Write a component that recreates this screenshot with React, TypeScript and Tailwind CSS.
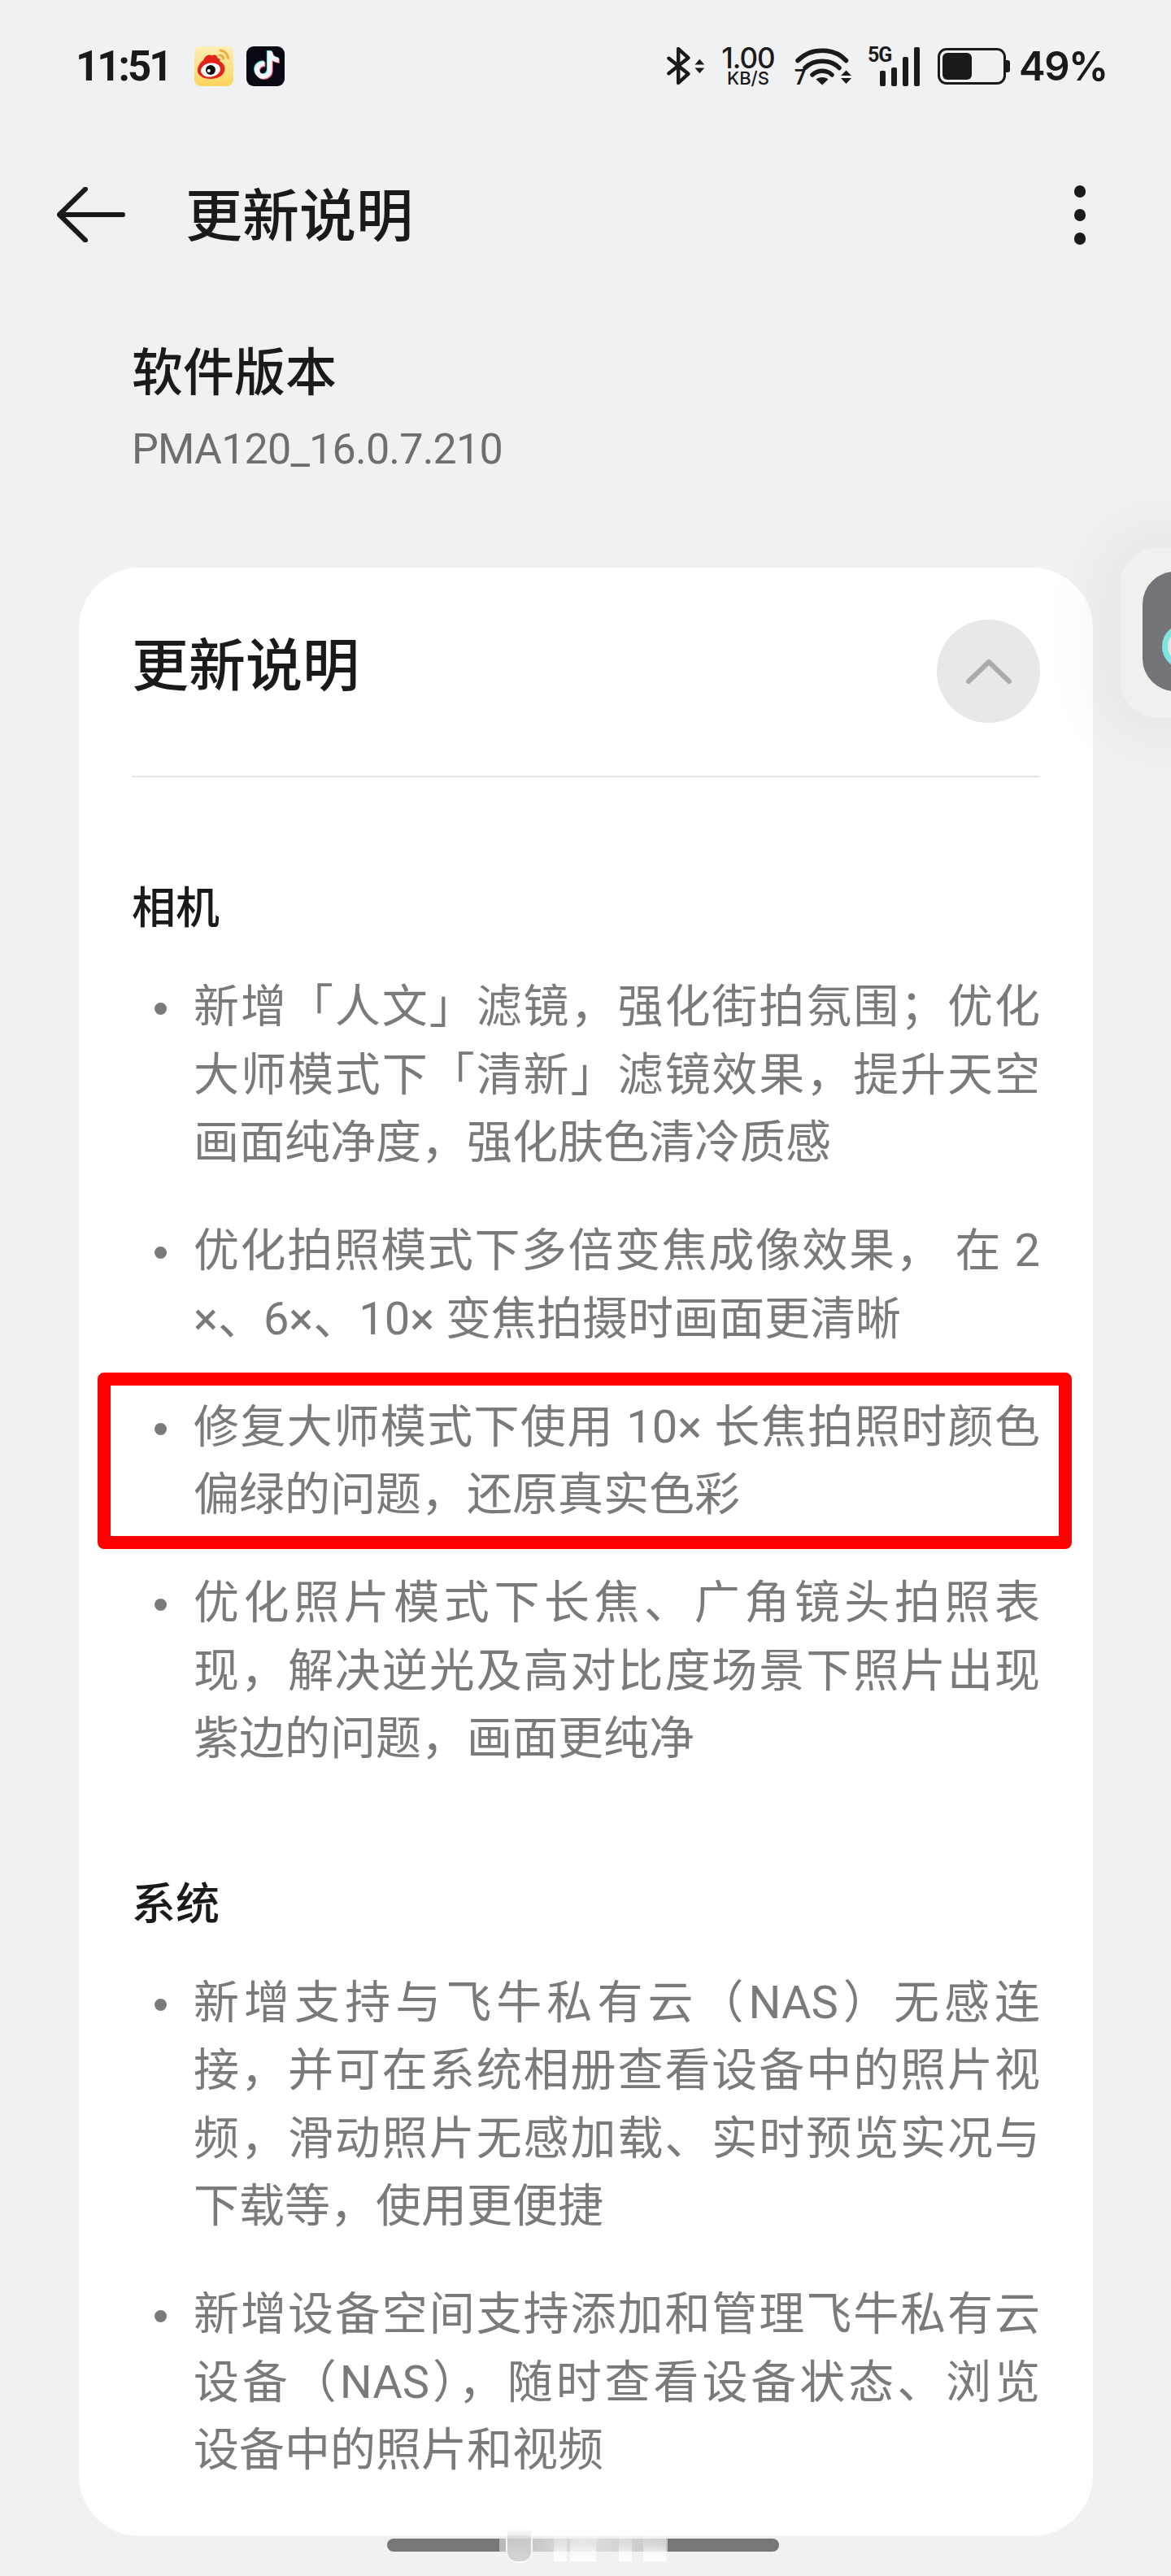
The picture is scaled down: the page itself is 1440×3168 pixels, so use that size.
import React from 'react';
import { FaTiktok } from 'react-icons/fa';

const sections = [
  {
    title: '相机',
    items: [
      ['新增「人文」滤镜，强化街拍氛围；优化', '大师模式下「清新」滤镜效果，提升天空', '画面纯净度，强化肤色清冷质感'],
      ['优化拍照模式下多倍变焦成像效果， 在 2', '×、6×、10× 变焦拍摄时画面更清晰'],
      ['修复大师模式下使用 10× 长焦拍照时颜色', '偏绿的问题，还原真实色彩'],
      ['优化照片模式下长焦、广角镜头拍照表', '现，解决逆光及高对比度场景下照片出现', '紫边的问题，画面更纯净'],
    ],
  },
  {
    title: '系统',
    items: [
      ['新增支持与飞牛私有云（NAS）无感连', '接，并可在系统相册查看设备中的照片视', '频，滑动照片无感加载、实时预览实况与', '下载等，使用更便捷'],
      ['新增设备空间支持添加和管理飞牛私有云', '设备（NAS），随时查看设备状态、浏览', '设备中的照片和视频'],
    ],
  },
];

function WeiboIcon() {
  return (
    <svg width="48" height="49" viewBox="0 0 48 49" className="block">
      <defs>
        <linearGradient id="wb" x1="0" y1="0" x2="0" y2="1">
          <stop offset="0" stopColor="#fdeeb5" />
          <stop offset="1" stopColor="#fdd45c" />
        </linearGradient>
      </defs>
      <rect width="48" height="49" rx="8" fill="url(#wb)" />
      <path d="M32 5c5 .3 9 4 9.600 9.500M31.500 11c2.500.2 3.900 1.800 4.300 4.200" fill="none" stroke="#f0a93b" strokeWidth="2.800" strokeLinecap="round" />
      <path d="M4 30c0-6 3.500-10.500 7.500-13.500 1-4.500 6.500-7.500 10.500-5 2.500-2 6.500-.5 6.500 3 1.800-.5 4 1 2.600 3.800 4 2 6.800 5.500 6.300 10.200-.6 7-8.500 11.500-17.400 11.500C11.500 40 4 36 4 30z" fill="#e2231a" />
      <ellipse cx="20" cy="29" rx="12" ry="8.500" fill="#fff" transform="rotate(-8 20 29)" />
      <circle cx="20" cy="29" r="6" fill="#111" />
      <circle cx="17.800" cy="30" r="2" fill="#fff" />
    </svg>
  );
}

function TiktokIcon() {
  return (
    <div className="relative w-[47px] h-[49px] rounded-[9px] bg-[#0a0a14] overflow-hidden">
      <FaTiktok className="absolute left-[6.500px] top-[5.500px] text-[#5fe6e6]" size={34} />
      <FaTiktok className="absolute left-[8.500px] top-[7.500px] text-[#f0557a]" size={34} />
      <FaTiktok className="absolute left-[7.500px] top-[6.500px] text-[#f4f4f4]" size={34} />
    </div>
  );
}

function UpDown() {
  return (
    <svg width="13" height="19" viewBox="0 0 13 19" className="block">
      <path d="M6.500 0.500 12.500 7.500H0.500zM0.500 11.500H12.500L6.500 18.500z" fill="#1a1a1a" />
    </svg>
  );
}

function BluetoothIcon() {
  return (
    <div className="flex items-center gap-[5px] w-[47px]">
      <svg width="30" height="48" viewBox="0 0 30 48" className="block">
        <path d="M2.500 14.500 27 34 14.500 45.500V2.500L27 14 2.500 33.500" fill="none" stroke="#1a1a1a" strokeWidth="4.500" strokeLinecap="round" strokeLinejoin="round" />
      </svg>
      <UpDown />
    </div>
  );
}

function WifiIcon() {
  return (
    <div className="relative w-[71px] h-[49px]">
      <svg width="71" height="49" viewBox="0 0 71 49" className="block">
        <path d="M4 17.500C20 1 48 1 63.500 17.500" fill="none" stroke="#1a1a1a" strokeWidth="5.500" strokeLinecap="round" />
        <path d="M13 26.500C24 15.500 44 15.500 55 26.500" fill="none" stroke="#1a1a1a" strokeWidth="5.500" strokeLinecap="round" />
        <path d="M22 35C28.500 28.500 40 28.500 46 35" fill="none" stroke="#1a1a1a" strokeWidth="5.500" strokeLinecap="round" />
        <path d="M26.500 40.500C30 37 38 37 41.500 40.500L34 47.500z" fill="#1a1a1a" />
        <path d="M63.500 29.500 70 36H57zM57 39H70L63.500 46z" fill="#1a1a1a" />
      </svg>
      <span className="absolute left-0 top-[27px] text-[25px] leading-[24px] font-bold text-[#1a1a1a]">7</span>
    </div>
  );
}

function SignalIcon() {
  return (
    <div className="relative w-[64px] h-[49px]">
      <span className="absolute left-0 top-[-2px] text-[25px] leading-[26px] font-bold tracking-[-1px] text-[#1a1a1a]">5G</span>
      <div className="absolute inset-0 flex items-end justify-end gap-[7px]">
        <div className="w-[7px] h-[19px] rounded-[2px] bg-[#1a1a1a]" />
        <div className="w-[7px] h-[23px] rounded-[2px] bg-[#1a1a1a]" />
        <div className="w-[7px] h-[36px] rounded-[2px] bg-[#1a1a1a]" />
        <div className="w-[7px] h-[48px] rounded-[2px] bg-[#1a1a1a]" />
      </div>
    </div>
  );
}

function BatteryIcon() {
  return (
    <div className="flex items-center">
      <div className="w-[84px] h-[45px] rounded-[11px] border-[3px] border-[#1a1a1a] p-[3px]">
        <div className="w-[36px] h-full rounded-[6px] bg-[#1a1a1a]" />
      </div>
      <div className="w-[5px] h-[15px] rounded-r-[3px] bg-[#1a1a1a]" />
    </div>
  );
}

function StatusBar() {
  return (
    <div className="h-[162px] pl-[93px] pr-[83px] flex items-center justify-between text-[#1a1a1a]">
      <div className="flex items-center">
        <span className="w-[146px] text-[51px] leading-none font-bold tracking-[-3px]">11:51</span>
        <WeiboIcon />
        <div className="w-[16px]" />
        <TiktokIcon />
      </div>
      <div className="flex items-center font-['Inter',sans-serif]">
        <BluetoothIcon />
        <div className="ml-[18px] w-[70px] flex flex-col items-center whitespace-nowrap">
          <span className="text-[35px] leading-[30px] font-medium tracking-[-1px]">1.00</span>
          <span className="text-[22px] leading-[20px] font-medium">KB/S</span>
        </div>
        <div className="ml-[22px] font-['Roboto',sans-serif]"><WifiIcon /></div>
        <div className="ml-[19px] font-['Roboto',sans-serif]"><SignalIcon /></div>
        <div className="ml-[22px]"><BatteryIcon /></div>
        <span className="ml-[11px] w-[104px] text-[49px] leading-none font-semibold tracking-[-1.500px] whitespace-nowrap">49%</span>
      </div>
    </div>
  );
}

function AppBar() {
  return (
    <div className="h-[204px] pl-[70px] pr-[105px] flex items-center text-[#1a1a1a]">
      <svg width="84" height="68" viewBox="0 0 84 68" className="block">
        <path d="M81 34H3M35 2.500 3 34l32 31.500" fill="none" stroke="#1a1a1a" strokeWidth="6" strokeLinecap="round" strokeLinejoin="round" />
      </svg>
      <span className="ml-[74px] pt-[5px] text-[70px] leading-none font-medium">更新说明</span>
      <div className="ml-auto flex flex-col gap-[14px]">
        <div className="w-[14px] h-[15px] rounded-full bg-[#1a1a1a]" />
        <div className="w-[14px] h-[15px] rounded-full bg-[#1a1a1a]" />
        <div className="w-[14px] h-[15px] rounded-full bg-[#1a1a1a]" />
      </div>
    </div>
  );
}

function NoteItem({ lines, marked }: { lines: string[]; marked: boolean }) {
  return (
    <li className="relative flex">
      <div className="w-[76px] shrink-0">
        <div className="ml-[28px] mt-[36px] w-[15px] h-[15px] rounded-full bg-[#7a7a7a]" />
      </div>
      <div className="flex-1 text-[56px] leading-[83.5px] text-[#7a7a7a] whitespace-pre">
        {lines.map((line, i) => (
          <div key={i} className={i < lines.length - 1 ? 'text-justify [text-align-last:justify] whitespace-normal' : ''}>
            {line}
          </div>
        ))}
      </div>
      {marked && (
        <div className="absolute left-[-42px] right-[-39px] top-[-26px] bottom-[-24px] border-[16px] border-[#fe0000] rounded-[8px]" />
      )}
    </li>
  );
}

function BottomBar() {
  return (
    <div className="absolute left-[476px] top-[3122px] w-[482px] h-[16px] rounded-[8px] bg-[#777777]">
      {/* frosted part in the middle of the handle */}
      <div className="absolute left-[138px] top-0 w-[207px] h-full bg-gradient-to-r from-[#b8b8b8] via-[#e0e0e0] to-[#c4c4c4]" />
      <div className="absolute left-[146px] top-[-12px] w-[33px] h-[42px] rounded-b-[14px] border-x-[2px] border-b-[2px] border-white/80 bg-gradient-to-b from-white/0 via-[#cccccc] to-[#d4d4d4]" />
      <div className="absolute left-[205px] top-[-12px] w-[16px] h-[40px] bg-gradient-to-b from-white/0 via-white/40 to-white" />
      <div className="absolute left-[225px] top-[-12px] w-[32px] h-[40px] bg-gradient-to-b from-white/0 via-white/30 to-white" />
      <div className="absolute left-[285px] top-[-12px] w-[16px] h-[40px] bg-gradient-to-b from-white/0 via-white/30 to-white" />
      <div className="absolute left-[315px] top-[-12px] w-[28px] h-[40px] bg-gradient-to-b from-white/0 via-white/30 to-white" />
    </div>
  );
}

export default function App() {
  return (
    <div className="relative w-[1440px] h-[3168px] overflow-hidden bg-[#f0f1f3] font-['Roboto','Noto_Sans_CJK_SC',sans-serif]">
      <StatusBar />
      <AppBar />

      <div className="mt-[53px] ml-[162px]">
        <div className="text-[63px] leading-[80px] font-medium text-[#1a1a1a]">软件版本</div>
        <div className="mt-[19px] text-[52px] leading-[70px] tracking-[-0.8px] text-[#6e6e6e]">PMA120_16.0.7.210</div>
      </div>

      <div className="mt-[110px] ml-[97px] w-[1247px] h-[2421px] rounded-[75px] bg-white px-[65px] pt-[64px]">
        <div className="flex items-start justify-between">
          <span className="pt-[2px] text-[70px] leading-[112px] font-medium text-[#1a1a1a]">更新说明</span>
          <div className="w-[127px] h-[127px] rounded-full bg-[#e8e8e8] flex items-center justify-center">
            <svg width="56" height="32" viewBox="0 0 56 32" className="block">
              <path d="M3 28 28 4l25 24" fill="none" stroke="#ababab" strokeWidth="6" strokeLinecap="round" strokeLinejoin="round" />
            </svg>
          </div>
        </div>
        <div className="mt-[65px] h-[2px] bg-[#e6e6e6]" />

        {sections.map((section) => (
          <div key={section.title} className="mt-[122px]">
            <div className="text-[54px] leading-[80px] font-medium text-[#1a1a1a]">{section.title}</div>
            <ul className="mt-[39px] flex flex-col gap-[49.500px]">
              {section.items.map((lines, i) => (
                <NoteItem key={i} lines={lines} marked={section.title === '相机' && i === 2} />
              ))}
            </ul>
          </div>
        ))}
      </div>

      {/* floating ball on the right edge */}
      <div className="absolute left-[1377px] top-[673px] w-[110px] h-[210px] rounded-[48px] bg-[#f0f0ef] shadow-[0_0_80px_30px_rgba(0,0,0,0.045)]">
        <div className="absolute left-[28px] top-[30px] w-[80px] h-[147px] rounded-[40px] bg-[#737378] overflow-hidden">
          <div className="absolute left-[24px] top-[64px] w-[60px] h-[56px] rounded-full border-[7px] border-[#7fe3e0] bg-[#e6e6e6]" />
        </div>
      </div>

      <BottomBar />
    </div>
  );
}
